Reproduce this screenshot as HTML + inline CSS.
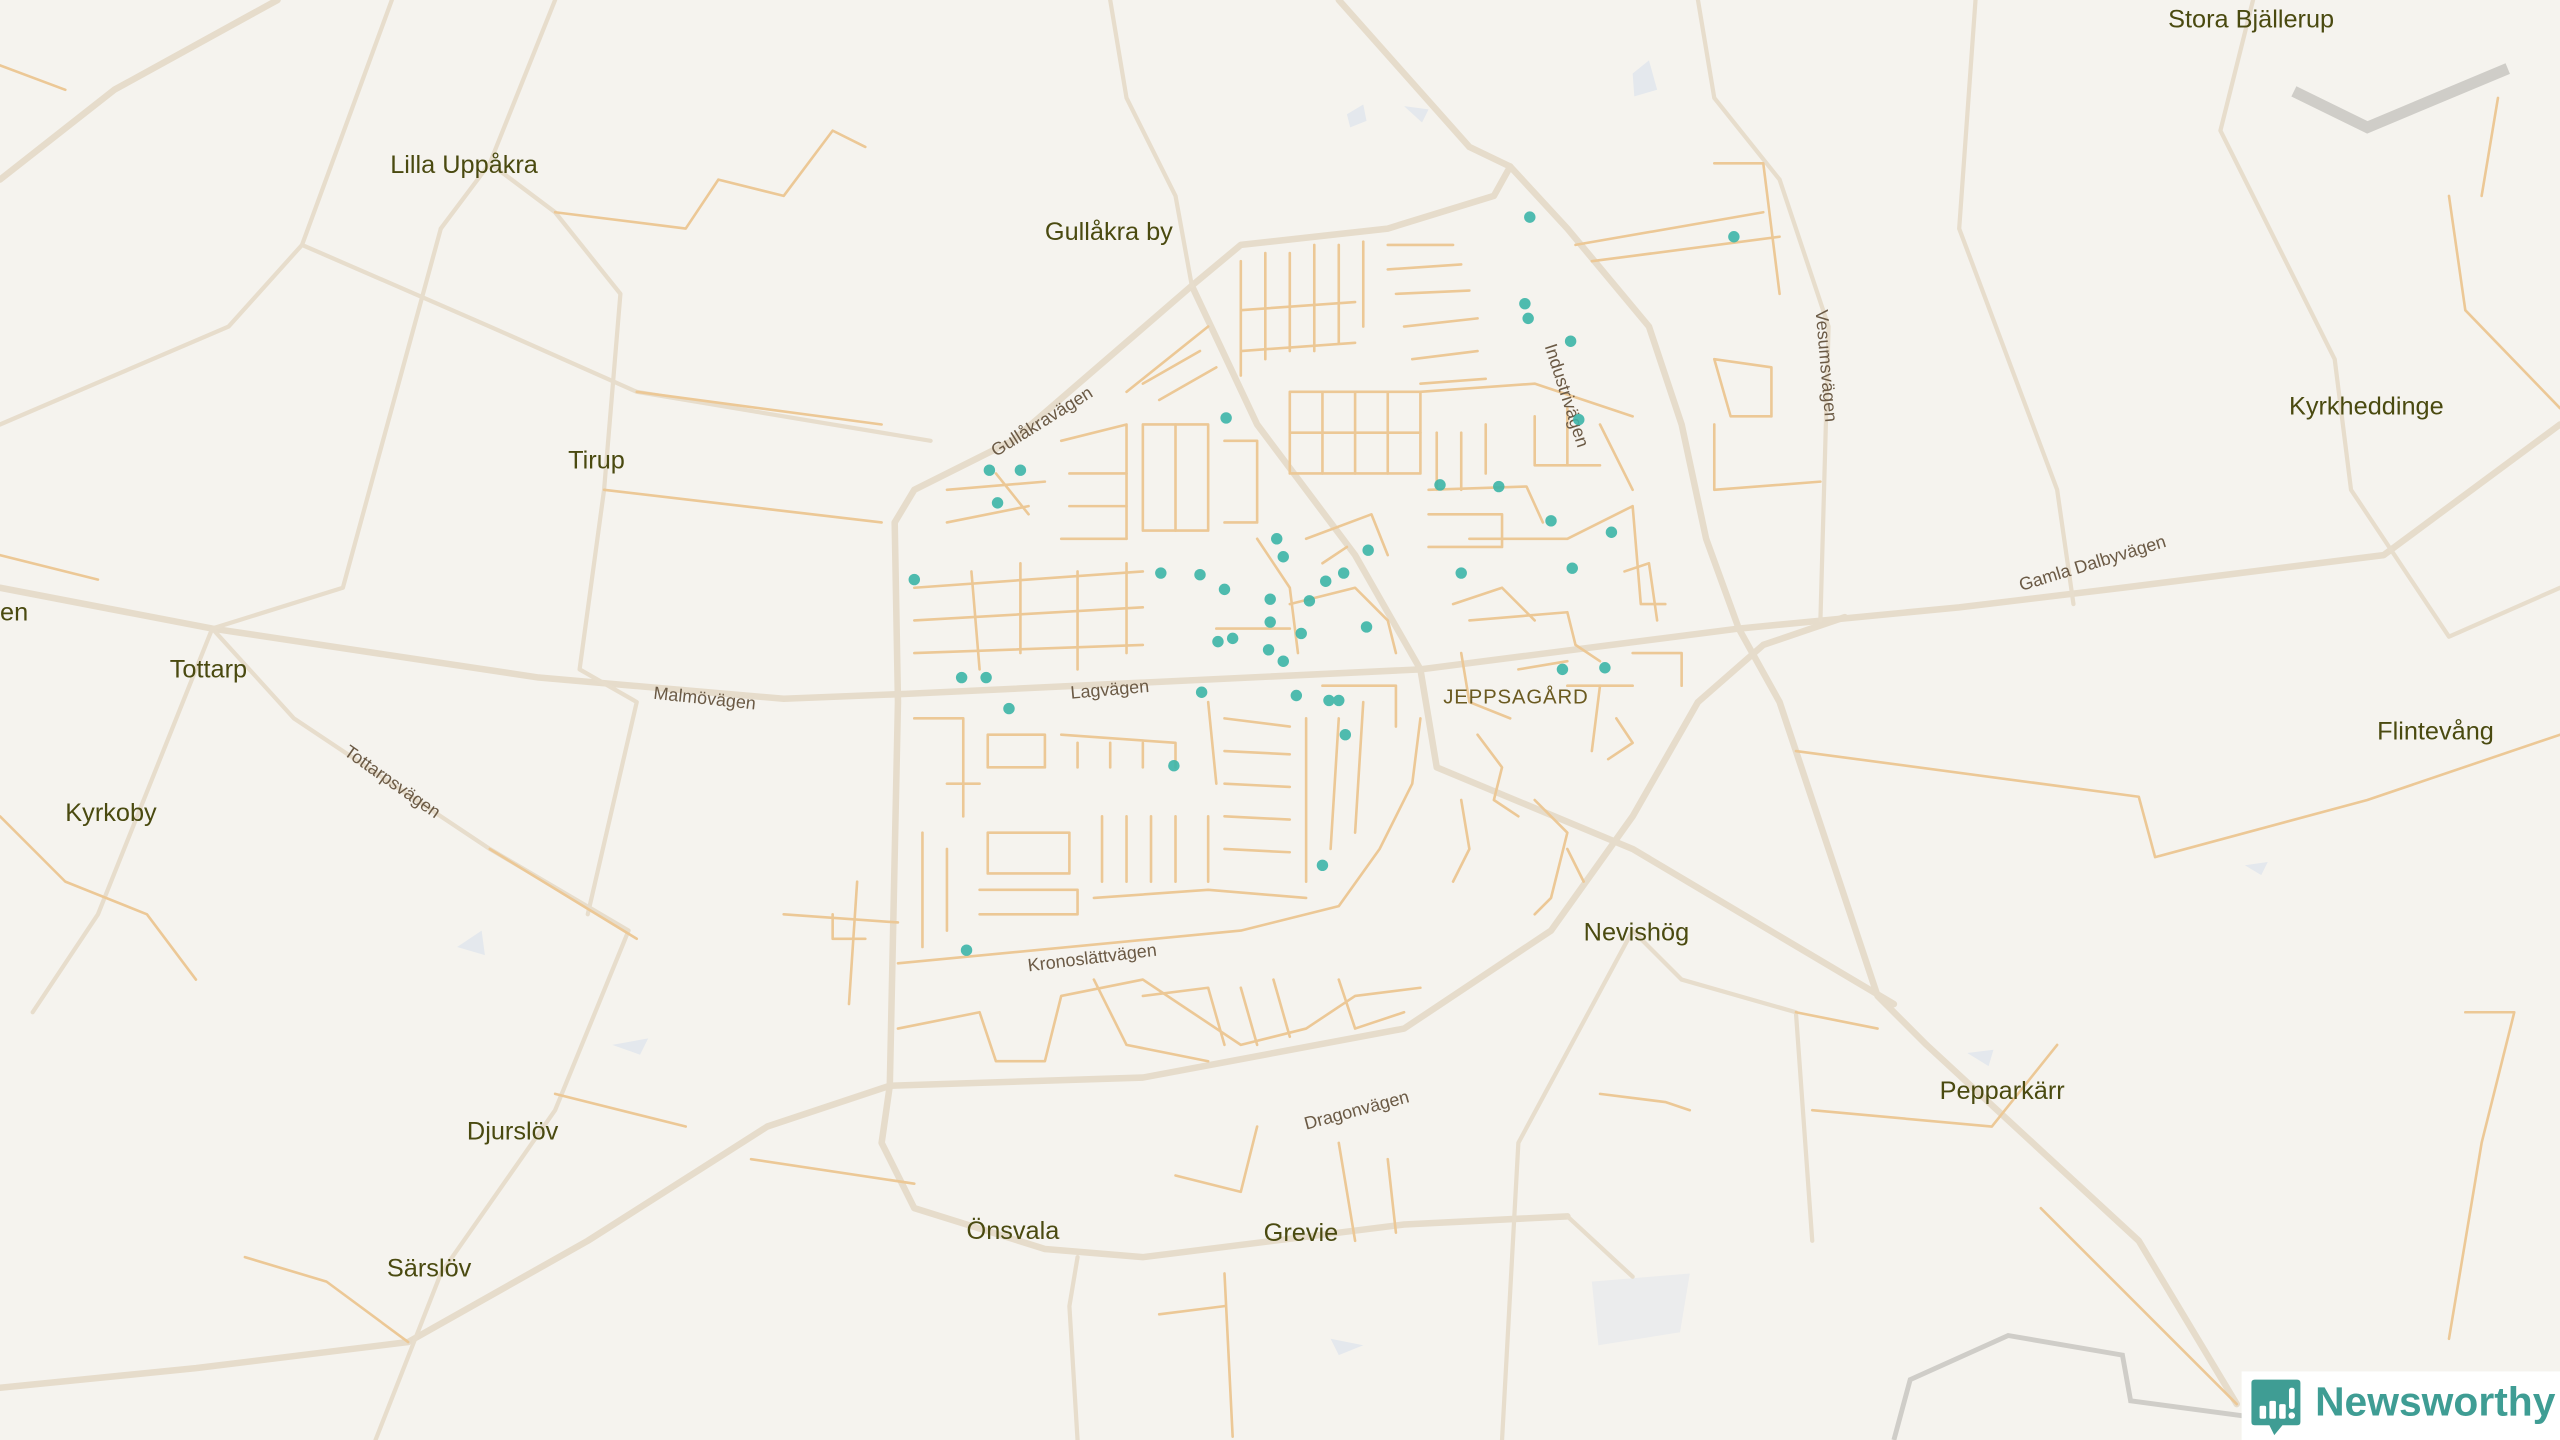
<!DOCTYPE html>
<html><head><meta charset="utf-8"><style>
html,body{margin:0;padding:0;width:2560px;height:1440px;overflow:hidden;background:#f5f3ee}
svg{display:block}
text{font-family:"Liberation Sans",sans-serif;fill:#4a4a10}
.pl{font-size:15.5px}
.rl{font-size:11px;fill:#6b5a45}
.M{fill:none;stroke:#e6dccb;stroke-width:4;stroke-linecap:round;stroke-linejoin:round}
.S{fill:none;stroke:#e7ddcc;stroke-width:2.6;stroke-linecap:round;stroke-linejoin:round}
.m{fill:none;stroke:#ecc896;stroke-width:1.6;stroke-linecap:round;stroke-linejoin:round}
.d{fill:#3db5a8;opacity:.9}
</style></head><body>
<svg width="2560" height="1440" viewBox="0 0 1568 882" xmlns="http://www.w3.org/2000/svg">
<rect width="1568" height="882" fill="#f5f3ee"/>
<path d="M1405 56 L1450 78 L1536 42" fill="none" stroke="#cfcdc8" stroke-width="7"/>
<path d="M1160 882 L1170 845 L1230 818 L1300 830 L1305 858 L1380 868" fill="none" stroke="#cfcdc8" stroke-width="3"/>
<g fill="#e4e8ed">
<path d="M1000 45 l10 -8 l5 18 l-14 4z"/><path d="M825 70 l10 -6 l2 10 l-10 4z"/><path d="M860 65 l15 2 l-4 8 z"/>
<path d="M975 785 l60 -5 l-6 36 l-50 8z" opacity=".6"/><path d="M280 580 l15 -10 l2 15z"/><path d="M375 640 l22 -4 l-5 10z"/>
<path d="M1375 530 l14 -2 l-4 8z"/><path d="M1205 645 l16 -2 l-3 10z"/><path d="M815 820 l20 4 l-15 6z"/>
</g>
<g class="M">
<path d="M0 360 L130 385 L330 415 L480 428 L555 425 L870 410 L1065 385 L1200 372 L1300 360 L1460 340 L1568 260"/>
<path d="M0 850 L120 838 L250 822 L360 760 L470 690 L545 665 L700 660 L860 630 L950 570 L1000 500 L1040 430 L1080 395 L1130 378"/>
<path d="M0 110 L70 55 L170 0"/>
<path d="M545 665 L550 430 L548 320 L560 300 L620 270 L730 175 L760 150 L850 140 L915 120 L925 102 L900 90 L820 0"/>
<path d="M925 102 L960 140 L1010 200 L1030 260 L1045 330 L1065 385 L1090 430 L1150 610 L1180 640 L1310 760 L1370 860"/>
<path d="M545 665 L540 700 L560 740 L640 765 L700 770 L860 750 L960 745"/>
<path d="M870 410 L880 470 L1000 520 L1160 615"/>
<path d="M730 175 L770 260 L830 340 L870 410"/>
</g>
<g class="S">
<path d="M240 0 L185 150 L140 200 L0 260"/>
<path d="M185 150 L300 200 L390 240 L570 270"/>
<path d="M340 0 L300 100 L270 140"/>
<path d="M270 140 L210 360 L130 385 L60 560 L20 620"/>
<path d="M370 300 L380 180 L340 130 L300 100"/>
<path d="M130 385 L180 440 L300 520 L385 570 L340 680 L270 780 L230 882"/>
<path d="M370 300 L355 410 L390 430 L360 560"/>
<path d="M680 0 L690 60 L720 120 L730 175"/>
<path d="M1040 0 L1050 60 L1090 110 L1120 200 L1115 380"/>
<path d="M1380 0 L1360 80 L1430 220 L1440 300 L1500 390 L1568 360"/>
<path d="M920 882 L930 700 L1000 570 L1030 600 L1100 620 L1110 760"/>
<path d="M960 745 L1000 782"/>
<path d="M660 882 L655 800 L660 770"/>
<path d="M1210 0 L1200 140 L1260 300 L1270 370"/>
</g>
<g class="m">
<path d="M0 40 L40 55"/><path d="M340 130 L420 140 L440 110 L480 120 L510 80 L530 90"/>
<path d="M0 340 L60 355"/><path d="M390 240 L540 260"/><path d="M370 300 L540 320"/>
<path d="M0 500 L40 540 L90 560 L120 600"/><path d="M300 520 L390 575"/>
<path d="M340 670 L420 690"/><path d="M460 710 L560 725"/><path d="M150 770 L200 785 L250 822"/>
<path d="M1100 460 L1310 488 L1320 525 L1450 490 L1568 450"/>
<path d="M1110 680 L1220 690 L1260 640"/><path d="M1500 120 L1510 190 L1568 250"/>
<path d="M1530 60 L1520 120"/><path d="M1510 620 L1540 620 L1520 700 L1500 820"/>
<path d="M1050 220 L1085 225 L1085 255 L1060 255 Z"/><path d="M1050 260 L1050 300 L1115 295"/>
<path d="M965 150 L1080 130"/><path d="M975 160 L1090 145"/><path d="M1050 100 L1080 100 L1090 180"/>
<path d="M720 720 L760 730 L770 690"/><path d="M820 700 L830 760"/><path d="M850 710 L855 755"/>
<path d="M750 780 L755 880"/><path d="M710 805 L750 800"/><path d="M980 670 L1020 675 L1035 680"/>
<path d="M1100 620 L1150 630"/><path d="M1250 740 L1370 860"/>
</g>
<g class="m">
<path d="M560 360 L700 350"/><path d="M560 380 L700 372"/><path d="M560 400 L700 395"/>
<path d="M595 350 L600 410"/><path d="M625 345 L625 400"/><path d="M660 350 L660 410"/><path d="M690 345 L690 400"/>
<path d="M560 440 L590 440 L590 500"/><path d="M580 480 L600 480"/><path d="M605 450 L640 450 L640 470 L605 470 Z"/>
<path d="M650 450 L720 455 L720 470"/><path d="M660 455 L660 470"/><path d="M680 455 L680 470"/><path d="M700 455 L700 470"/>
<path d="M740 430 L745 480"/><path d="M750 440 L790 445"/><path d="M750 460 L790 462"/><path d="M750 480 L790 482"/><path d="M750 500 L790 502"/><path d="M750 520 L790 522"/>
<path d="M565 510 L565 580"/><path d="M580 520 L580 570"/><path d="M605 510 L655 510 L655 535 L605 535 Z"/>
<path d="M675 500 L675 540"/><path d="M690 500 L690 540"/><path d="M705 500 L705 540"/><path d="M720 500 L720 540"/><path d="M740 500 L740 540"/>
<path d="M600 545 L660 545 L660 560 L600 560"/><path d="M670 550 L740 545 L800 550"/>
<path d="M480 560 L550 565"/><path d="M510 560 L510 575 L530 575"/><path d="M525 540 L520 615"/>
<path d="M550 590 L760 570 L820 555 L845 520 L865 480 L870 440"/><path d="M800 440 L800 540"/><path d="M820 440 L815 520"/><path d="M835 430 L830 510"/>
<path d="M550 630 L600 620 L610 650 L640 650 L650 610 L700 600 L730 620 L760 640 L800 630 L830 610 L870 605"/>
<path d="M670 600 L690 640 L740 650"/><path d="M700 610 L740 605 L750 640"/><path d="M760 605 L770 640"/><path d="M780 600 L790 635"/><path d="M820 600 L830 630 L860 620"/>
<path d="M580 300 L640 295"/><path d="M580 320 L630 310"/><path d="M610 290 L630 315"/>
<path d="M650 270 L690 260 L690 330"/><path d="M655 290 L690 290"/><path d="M655 310 L690 310"/><path d="M650 330 L690 330"/>
<path d="M700 260 L740 260 L740 325 L700 325 Z"/><path d="M720 260 L720 325"/><path d="M750 270 L770 270 L770 320 L750 320"/>
<path d="M690 240 L740 200"/><path d="M700 235 L735 215"/><path d="M710 245 L745 225"/>
<path d="M760 160 L760 230"/><path d="M775 155 L775 220"/><path d="M790 155 L790 215"/><path d="M805 150 L805 215"/><path d="M820 150 L820 210"/><path d="M835 148 L835 200"/>
<path d="M760 190 L830 185"/><path d="M760 215 L830 210"/><path d="M790 240 L870 240 L870 290 L790 290 Z"/><path d="M810 240 L810 290"/><path d="M830 240 L830 290"/><path d="M850 240 L850 290"/><path d="M790 265 L870 265"/>
<path d="M850 150 L890 150"/><path d="M850 165 L895 162"/><path d="M855 180 L900 178"/><path d="M860 200 L905 195"/><path d="M865 220 L905 215"/><path d="M870 235 L910 232"/>
<path d="M870 240 L940 235 L1000 255"/><path d="M880 265 L880 300"/><path d="M895 265 L895 300"/><path d="M910 260 L910 290"/>
<path d="M875 300 L935 298 L945 320"/><path d="M940 255 L940 285 L980 285"/><path d="M960 250 L960 285"/><path d="M980 260 L1000 300"/>
<path d="M875 315 L920 315 L920 335 L875 335"/><path d="M890 370 L920 360 L940 380"/><path d="M900 380 L960 375 L965 395 L980 405"/>
<path d="M900 330 L960 330 L1000 310 L1005 370 L1020 370"/><path d="M995 350 L1010 345 L1015 380"/>
<path d="M800 330 L840 315 L850 340"/><path d="M810 345 L825 335"/><path d="M790 370 L830 360 L850 380 L855 400"/>
<path d="M770 330 L790 360 L795 400"/><path d="M745 385 L790 385"/>
<path d="M895 400 L900 430 L925 440"/><path d="M930 410 L960 405"/><path d="M960 420 L1000 420"/><path d="M980 420 L975 460"/><path d="M990 440 L1000 455 L985 465"/>
<path d="M905 450 L920 470 L915 490 L930 500"/><path d="M895 490 L900 520 L890 540"/><path d="M940 490 L960 510 L950 550 L940 560"/><path d="M960 520 L970 540"/>
<path d="M1000 400 L1030 400 L1030 420"/><path d="M810 420 L855 420 L855 445"/>
</g>
<text class="pl" x="239" y="106">Lilla Uppåkra</text>
<text class="pl" x="640" y="147">Gullåkra by</text>
<text class="pl" x="348" y="287">Tirup</text>
<text class="pl" x="104" y="415">Tottarp</text>
<text class="pl" x="40" y="503">Kyrkoby</text>
<text class="pl" x="286" y="698">Djurslöv</text>
<text class="pl" x="237" y="782">Särslöv</text>
<text class="pl" x="592" y="759">Önsvala</text>
<text class="pl" x="774" y="760">Grevie</text>
<text class="pl" x="970" y="576">Nevishög</text>
<text class="pl" x="1188" y="673">Pepparkärr</text>
<text class="pl" x="1456" y="453">Flintevång</text>
<text class="pl" x="1402" y="254">Kyrkheddinge</text>
<text class="pl" x="1328" y="17">Stora Bjällerup</text>
<text class="pl" x="0" y="380">en</text>
<text x="884" y="431" style="font-size:12.5px;fill:#6b5a20;letter-spacing:.5px">JEPPSAGÅRD</text>
<text class="rl" x="400" y="428" transform="rotate(6 400 428)">Malmövägen</text>
<text class="rl" x="656" y="428" transform="rotate(-5 656 428)">Lagvägen</text>
<text class="rl" x="630" y="595" transform="rotate(-7 630 595)">Kronoslättvägen</text>
<text class="rl" x="800" y="692" transform="rotate(-15 800 692)">Dragonvägen</text>
<text class="rl" x="610" y="280" transform="rotate(-32 610 280)">Gullåkravägen</text>
<text class="rl" x="210" y="462" transform="rotate(35 210 462)">Tottarpsvägen</text>
<text class="rl" x="946" y="212" transform="rotate(72 946 212)">Industrivägen</text>
<text class="rl" x="1112" y="190" transform="rotate(85 1112 190)">Vesumsvägen</text>
<text class="rl" x="1238" y="362" transform="rotate(-17 1238 362)">Gamla Dalbyvägen</text>
<g class="d">
<circle cx="937" cy="133" r="3.5"/><circle cx="1062" cy="145" r="3.5"/><circle cx="934" cy="186" r="3.5"/><circle cx="936" cy="195" r="3.5"/><circle cx="962" cy="209" r="3.5"/><circle cx="967" cy="257" r="3.5"/>
<circle cx="751" cy="256" r="3.5"/><circle cx="606" cy="288" r="3.5"/><circle cx="625" cy="288" r="3.5"/><circle cx="611" cy="308" r="3.5"/>
<circle cx="882" cy="297" r="3.5"/><circle cx="918" cy="298" r="3.5"/><circle cx="950" cy="319" r="3.5"/><circle cx="987" cy="326" r="3.5"/><circle cx="963" cy="348" r="3.5"/><circle cx="895" cy="351" r="3.5"/>
<circle cx="782" cy="330" r="3.5"/><circle cx="786" cy="341" r="3.5"/><circle cx="838" cy="337" r="3.5"/><circle cx="823" cy="351" r="3.5"/><circle cx="812" cy="356" r="3.5"/>
<circle cx="560" cy="355" r="3.5"/><circle cx="711" cy="351" r="3.5"/><circle cx="735" cy="352" r="3.5"/><circle cx="750" cy="361" r="3.5"/><circle cx="778" cy="367" r="3.5"/><circle cx="802" cy="368" r="3.5"/>
<circle cx="778" cy="381" r="3.5"/><circle cx="837" cy="384" r="3.5"/><circle cx="797" cy="388" r="3.5"/><circle cx="746" cy="393" r="3.5"/><circle cx="755" cy="391" r="3.5"/><circle cx="777" cy="398" r="3.5"/><circle cx="786" cy="405" r="3.5"/>
<circle cx="589" cy="415" r="3.5"/><circle cx="604" cy="415" r="3.5"/><circle cx="957" cy="410" r="3.5"/><circle cx="983" cy="409" r="3.5"/><circle cx="736" cy="424" r="3.5"/><circle cx="794" cy="426" r="3.5"/><circle cx="814" cy="429" r="3.5"/><circle cx="820" cy="429" r="3.5"/>
<circle cx="618" cy="434" r="3.5"/><circle cx="824" cy="450" r="3.5"/><circle cx="719" cy="469" r="3.5"/><circle cx="810" cy="530" r="3.5"/><circle cx="592" cy="582" r="3.5"/>
</g>
<rect x="1373" y="840" width="195" height="42" fill="#ffffff"/>
<g transform="translate(1379,845)">
<path d="M2 0 H28 Q30 0 30 2 V26 Q30 28 28 28 H19 L14 34 L11 28 H2 Q0 28 0 26 V2 Q0 0 2 0Z" fill="#3f9d94"/>
<rect x="5" y="16" width="4" height="8" rx="1" fill="#fff"/><rect x="11" y="13" width="4" height="11" rx="1" fill="#fff"/><rect x="17" y="15" width="4" height="9" rx="1" fill="#fff"/><rect x="23" y="5" width="3.5" height="13" rx="1.5" fill="#fff"/><circle cx="24.7" cy="22" r="2" fill="#fff"/>
</g>
<text x="1418" y="867" style="font-size:25px;font-weight:bold;fill:#3f9d94">Newsworthy</text>
</svg>
</body></html>
